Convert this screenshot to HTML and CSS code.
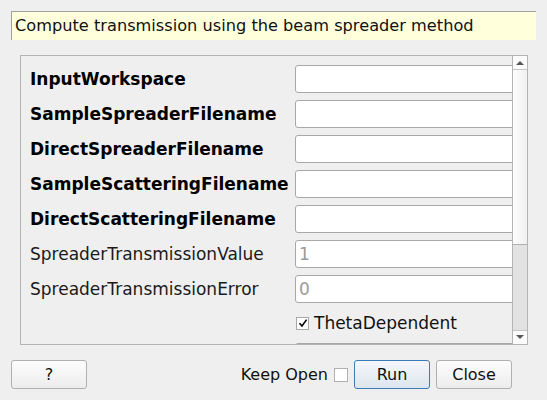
FILE: index.html
```html
<!DOCTYPE html>
<html>
<head>
<meta charset="utf-8">
<link rel="stylesheet" href="styles.css">
</head>
<body>
<div class="dialog">
  <div class="desc">Compute transmission using the beam spreader method</div>
  <div class="frame">
    <div class="viewport">
      <div class="rows">
        <div class="row"><span class="label bold">InputWorkspace</span><span class="field"></span></div>
        <div class="row"><span class="label bold">SampleSpreaderFilename</span><span class="field"></span></div>
        <div class="row"><span class="label bold">DirectSpreaderFilename</span><span class="field"></span></div>
        <div class="row"><span class="label bold">SampleScatteringFilename</span><span class="field"></span></div>
        <div class="row"><span class="label bold">DirectScatteringFilename</span><span class="field"></span></div>
        <div class="row"><span class="label">SpreaderTransmissionValue</span><span class="field"><span class="ph">1</span></span></div>
        <div class="row"><span class="label">SpreaderTransmissionError</span><span class="field"><span class="ph">0</span></span></div>
        <div class="row short"><span class="label"></span><span class="check-wrap"><span class="cbox"><svg width="10" height="10" viewBox="0 0 10 10"><path d="M1.5 5.2 L4 8 L8.6 1.6" fill="none" stroke="#000" stroke-width="1.6"/></svg></span><span class="ctext">ThetaDependent</span></span></div>
        <div class="row"><span class="label"></span><span class="field"></span></div>
      </div>
    </div>
    <div class="scrollbar">
      <div class="sb-btn up"><svg width="8" height="5" viewBox="0 0 8 5"><path d="M0 5 L4 1 L8 5 Z" fill="#555"/></svg></div>
      <div class="sb-thumb"></div>
      <div class="sb-groove"></div>
      <div class="sb-btn down"><svg width="8" height="5" viewBox="0 0 8 5"><path d="M0 0 L8 0 L4 4 Z" fill="#555"/></svg></div>
    </div>
  </div>
  <div class="buttons">
    <button class="btn">?</button>
    <span class="spacer"></span>
    <span class="keep">Keep Open</span>
    <span class="kbox"></span>
    <button class="btn run">Run</button>
    <button class="btn">Close</button>
  </div>
</div>
</body>
</html>
```

FILE: styles.css
```css
html, body {
  margin: 0;
  padding: 0;
  background: #efefef;
  width: 547px;
  height: 400px;
  overflow: hidden;
  font-family: "DejaVu Sans", sans-serif;
  font-size: 16px;
  color: #111;
}
.dialog {
  padding: 11px 0 0 11px;
  display: flex;
  flex-direction: column;
}
.desc {
  height: 28px;
  background: #ffffdc;
  border-top: 1px solid #a0a0a0;
  border-left: 1px solid #a0a0a0;
  padding-left: 3px;
  box-sizing: content-box;
  width: 521px;
  line-height: 27px;
  font-size: 16.2px;
  color: #111;
  white-space: nowrap;
}
.frame {
  margin-top: 15px;
  margin-left: 9px;
  width: 506px;
  height: 288px;
  border: 1px solid #b4b4b4;
  display: flex;
}
.viewport {
  flex: 1;
  overflow: hidden;
  position: relative;
}
.rows {
  padding: 9px 0 0 9px;
  display: flex;
  flex-direction: column;
  gap: 7px;
  font-size: 17px;
}
.row {
  display: flex;
  align-items: center;
  height: 28px;
}
.row.short {
  height: 26px;
}
.label {
  width: 265px;
  flex: none;
  white-space: nowrap;
  color: #1a1a1a;
}
.label.bold {
  font-weight: bold;
  color: #000;
}
.field {
  flex: none;
  width: 240px;
  height: 28px;
  box-sizing: border-box;
  background: #fff;
  border: 1px solid #a8a8a8;
  border-radius: 3px;
  padding-left: 3px;
  line-height: 26px;
}
.ph {
  color: #9a9a9a;
}
.check-wrap {
  display: flex;
  align-items: center;
  padding-left: 1px;
}
.cbox {
  width: 13px;
  height: 13px;
  box-sizing: border-box;
  border: 1px solid #a8a8a8;
  background: #fff;
  display: flex;
  align-items: center;
  justify-content: center;
}
.ctext {
  margin-left: 5px;
  color: #111;
}
.scrollbar {
  width: 14px;
  flex: none;
  border-left: 1px solid #b4b4b4;
  display: flex;
  flex-direction: column;
}
.sb-btn {
  height: 13px;
  background: #fbfbfb;
  display: flex;
  align-items: center;
  justify-content: center;
  flex: none;
}
.sb-btn.up {
  border-bottom: 1px solid #c4c4c4;
}
.sb-btn.down {
  border-top: 1px solid #c4c4c4;
}
.sb-thumb {
  height: 174px;
  flex: none;
  background: linear-gradient(to right, #fdfdfd, #f0f0f0);
  border-bottom: 1px solid #b0b0b0;
}
.sb-groove {
  flex: 1;
  background: #e2e2e2;
}
.buttons {
  margin-top: 15px;
  display: flex;
  align-items: center;
  width: 501px;
  height: 29px;
}
.spacer {
  flex: 1;
}
.btn {
  width: 76px;
  height: 29px;
  font-family: "DejaVu Sans", sans-serif;
  font-size: 16px;
  color: #111;
  background: linear-gradient(to bottom, #fdfdfd, #ececec);
  border: 1px solid #b0b0b0;
  border-radius: 3px;
  padding: 0;
}
.btn.run {
  margin-left: 6px;
  margin-right: 6px;
  border-color: #3d7ab8;
  background: linear-gradient(to bottom, #f4f7fa, #dde6ee);
}
.keep {
  color: #111;
}
.kbox {
  width: 14px;
  height: 14px;
  box-sizing: border-box;
  border: 1px solid #b0b0b0;
  background: #fff;
  margin-left: 6px;
}
```
